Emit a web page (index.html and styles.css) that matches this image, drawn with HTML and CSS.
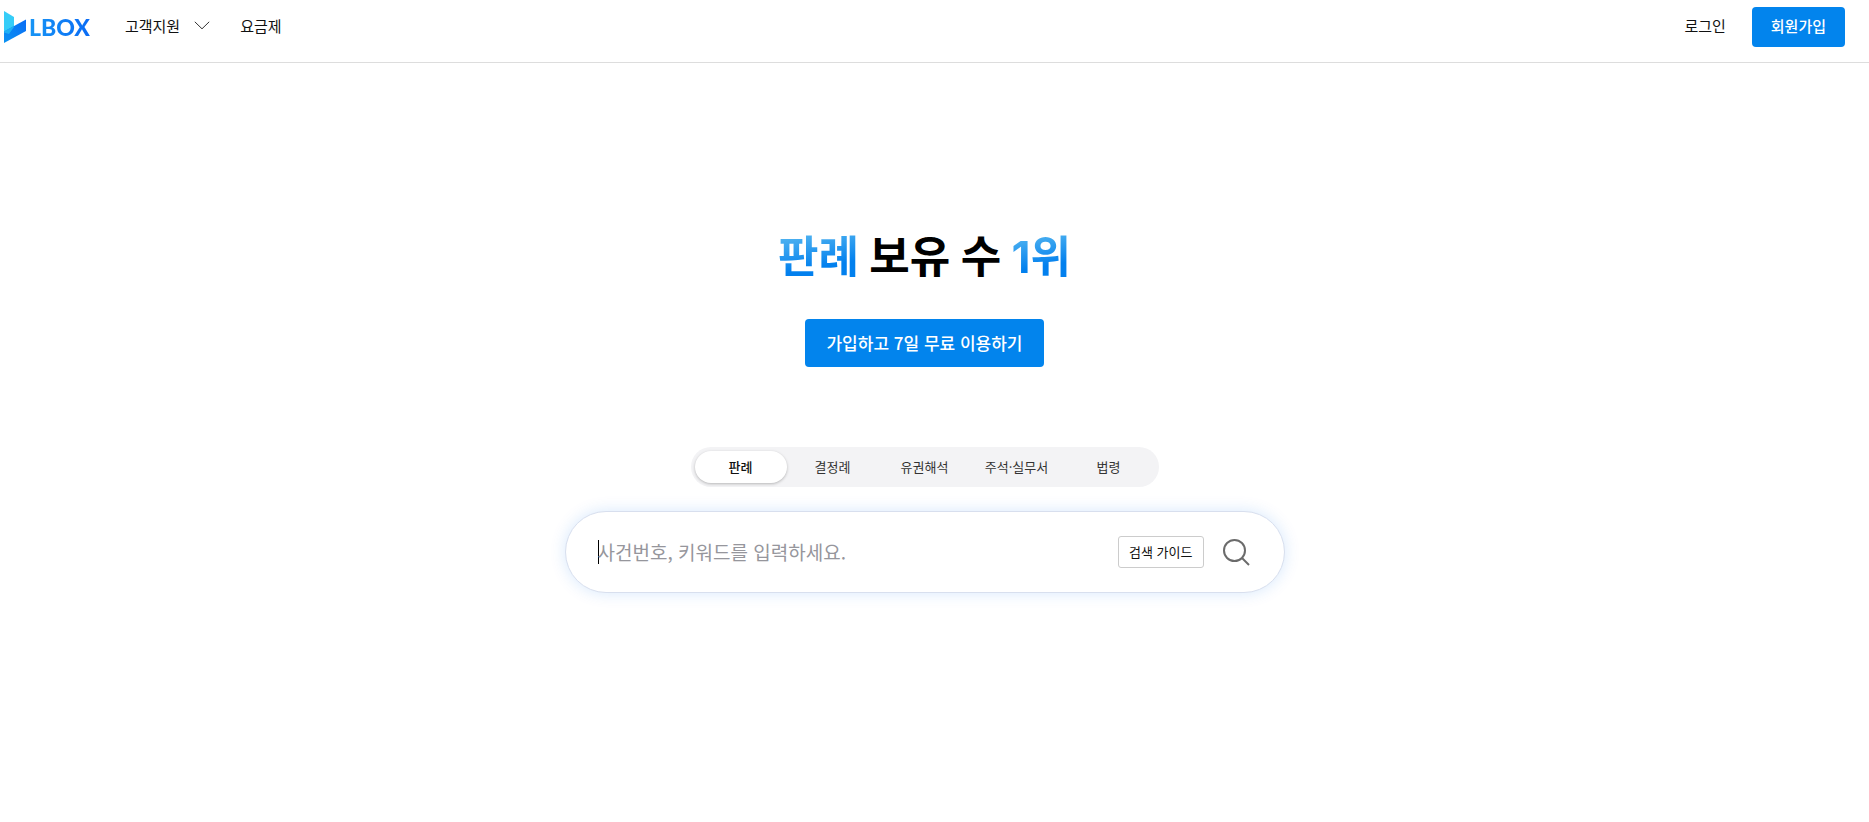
FILE: index.html
```
<!DOCTYPE html>
<html lang="ko">
<head>
    <meta charset="utf-8">
    <meta name="viewport" content="width=device-width, initial-scale=1">
    <title>LBOX</title>
    <link rel="stylesheet" href="styles.css">
</head>
<body>
    <header class="header">
        <a href="#" class="logo">
            <svg class="logo-mark" width="22" height="32" viewBox="0 0 22 32">
                <defs>
                    <linearGradient id="markBlue" x1="0" y1="1" x2="1" y2="0">
                        <stop offset="0" stop-color="#0b93f2"/>
                        <stop offset="1" stop-color="#0a6cf5"/>
                    </linearGradient>
                </defs>
                <path d="M0 0L10 6V16L0 21.500Z" fill="#36cdf8"/>
                <path d="M0 20.500L22 8.500V20L0 32Z" fill="url(#markBlue)"/>
                <path d="M0 20.500L10 15V16L5 23L0 21.500Z" fill="#1fb0f5"/>
            </svg>
            <span class="logo-text">LBOX</span>
        </a>
        <nav class="nav">
            <button type="button" class="nav-item">고객지원
                <svg width="16" height="9" viewBox="0 0 16 9" fill="none" stroke="#333" stroke-width="1"><path d="M0.800 0.800L8 7.800L15.200 0.800"/></svg>
            </button>
            <a href="#" class="nav-item">요금제</a>
        </nav>
        <div class="account">
            <a href="#" class="nav-item">로그인</a>
            <button type="button" class="signup">회원가입</button>
        </div>
    </header>

    <main class="main">
        <h1><span class="accent">판례</span> 보유 수 <span class="accent">1위</span></h1>
        <button type="button" class="trial">가입하고 7일 무료 이용하기</button>

        <div class="tabs" role="tablist">
            <button type="button" class="tab active" role="tab" aria-selected="true">판례</button>
            <button type="button" class="tab" role="tab">결정례</button>
            <button type="button" class="tab" role="tab">유권해석</button>
            <button type="button" class="tab" role="tab">주석·실무서</button>
            <button type="button" class="tab" role="tab">법령</button>
        </div>

        <form class="search">
            <input type="text" class="search-input" aria-label="검색어" placeholder="사건번호, 키워드를 입력하세요.">
            <button type="button" class="guide">검색 가이드</button>
            <button type="submit" class="search-button" aria-label="검색">
                <svg width="28" height="28" viewBox="0 0 28 28" fill="none" stroke="#6b6b6b" stroke-width="2"><circle cx="12.500" cy="12.500" r="10.500"/><path d="M20 20L27 27"/></svg>
            </button>
        </form>
    </main>
</body>
</html>
```
FILE: styles.css
```
* {
    box-sizing: border-box;
}

body {
    margin: 0;
    font-family: 'Noto Sans CJK KR', 'Noto Sans', sans-serif;
    font-size: 15px;
    color: #111;
    background-color: #fff;
}

a {
    color: inherit;
    text-decoration: none;
}

button {
    font-family: inherit;
    color: inherit;
    background: none;
    border: none;
    padding: 0 0 2px;
    cursor: pointer;
}

.header {
    display: flex;
    align-items: center;
    height: 63px;
    padding: 0 24px 9px 4px;
    border-bottom: 1px solid #ddd;
}

.logo {
    display: flex;
    align-items: center;
    gap: 3px;
}

.logo-text {
    font-family: Lato, sans-serif;
    font-size: 23px;
    font-weight: 900;
    line-height: 32px;
    background: linear-gradient(90deg, #1795f5, #0a6cf5);
    -webkit-background-clip: text;
    background-clip: text;
    color: transparent;
}

.nav {
    display: flex;
    align-items: center;
    gap: 30px;
    margin-left: 35px;
}

.nav-item {
    display: flex;
    align-items: center;
    gap: 14px;
    padding-bottom: 2px;
    font-size: 15px;
    line-height: 24px;
}

.account {
    display: flex;
    align-items: center;
    gap: 26px;
    margin-left: auto;
}

.signup {
    height: 40px;
    padding: 0 19px 2px;
    border-radius: 4px;
    background-color: #0284ed;
    color: #fff;
    font-size: 15px;
    font-weight: 500;
}

.main {
    display: flex;
    flex-direction: column;
    align-items: center;
    padding: 162px 20px 80px 0;
}

h1 {
    margin: 0;
    font-family: Inter, 'Noto Sans CJK KR', sans-serif;
    font-size: 44px;
    font-weight: 700;
    line-height: 64px;
    color: #000;
}

.accent {
    background: linear-gradient(170deg, #4bb0f0 15%, #0280ee 65%);
    -webkit-background-clip: text;
    background-clip: text;
    color: transparent;
}

.trial {
    height: 48px;
    margin-top: 30px;
    padding: 0 21px 2px;
    border-radius: 4px;
    background-color: #0284ed;
    color: #fff;
    font-size: 17px;
    font-weight: 500;
}

.tabs {
    display: flex;
    margin-top: 80px;
    padding: 4px;
    border-radius: 20px;
    background-color: #f3f3f5;
}

.tab {
    width: 92px;
    height: 32px;
    border-radius: 16px;
    font-size: 13px;
    color: #333;
}

.tab.active {
    background-color: #fff;
    color: #111;
    font-weight: 500;
    box-shadow: 0 1px 3px rgba(0, 0, 0, 0.25);
}

.search {
    display: flex;
    align-items: center;
    width: 100%;
    max-width: 720px;
    height: 82px;
    margin-top: 24px;
    padding: 0 34px 0 32px;
    border: 1px solid #d8dfee;
    border-radius: 41px;
    background-color: #fff;
    box-shadow: 0 0 16px rgba(2, 112, 237, 0.16);
}

/* text cursor is painted at the start of the field */
.search-input {
    flex: 1;
    min-width: 0;
    height: 32px;
    padding: 0 0 2px;
    border: none;
    outline: none;
    font-family: inherit;
    font-size: 19px;
    background: linear-gradient(#000, #000) no-repeat left center / 1px 24px;
}

.search-input::placeholder {
    color: #96969c;
    opacity: 1;
}

.guide {
    height: 32px;
    padding: 0 10px 2px;
    border: 1px solid #ccc;
    border-radius: 3px;
    font-size: 13px;
    color: #111;
}

.search-button {
    display: flex;
    margin-left: 18px;
    padding: 0;
}
```
